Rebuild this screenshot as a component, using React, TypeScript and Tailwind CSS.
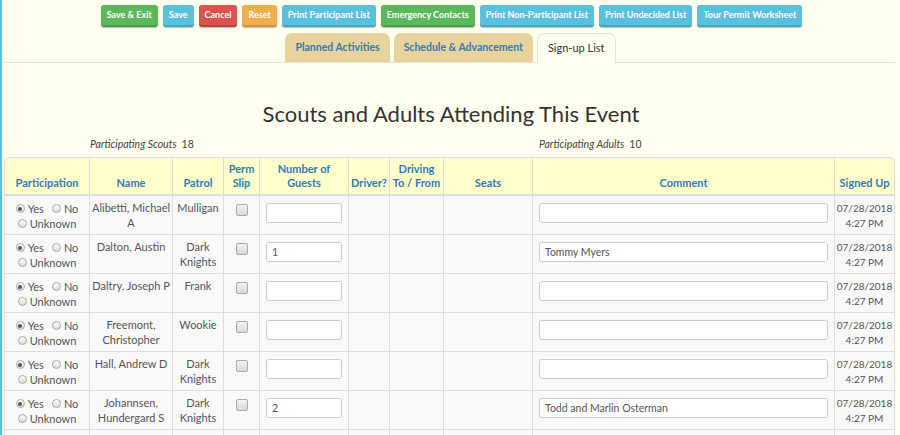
import React from "react";

const font = { fontFamily: 'Lato, "Open Sans", sans-serif' };

type Row = {
  name: string[];
  patrol: string[];
  guests: string;
  comment: string;
};

const rows: Row[] = [
  { name: ["Alibetti, Michael", "A"], patrol: ["Mulligan"], guests: "", comment: "" },
  { name: ["Dalton, Austin"], patrol: ["Dark", "Knights"], guests: "1", comment: "Tommy Myers" },
  { name: ["Daltry, Joseph P"], patrol: ["Frank"], guests: "", comment: "" },
  { name: ["Freemont,", "Christopher"], patrol: ["Wookie"], guests: "", comment: "" },
  { name: ["Hall, Andrew D"], patrol: ["Dark", "Knights"], guests: "", comment: "" },
  { name: ["Johannsen,", "Hundergard S"], patrol: ["Dark", "Knights"], guests: "2", comment: "Todd and Marlin Osterman" },
];

const headers = [
  ["Participation"],
  ["Name"],
  ["Patrol"],
  ["Perm", "Slip"],
  ["Number of", "Guests"],
  ["Driver?"],
  ["Driving", "To / From"],
  ["Seats"],
  ["Comment"],
  ["Signed Up"],
];

const buttons = [
  { label: "Save & Exit", cls: "bg-[#5cb85c] border-[#4a9a4a]" },
  { label: "Save", cls: "bg-[#5bc0de] border-[#46a6c2]" },
  { label: "Cancel", cls: "bg-[#d9534f] border-[#b9403c]" },
  { label: "Reset", cls: "bg-[#f0ad4e] border-[#d3933a]" },
  { label: "Print Participant List", cls: "bg-[#5bc0de] border-[#46a6c2]" },
  { label: "Emergency Contacts", cls: "bg-[#5cb85c] border-[#4a9a4a]" },
  { label: "Print Non-Participant List", cls: "bg-[#5bc0de] border-[#46a6c2]" },
  { label: "Print Undecided List", cls: "bg-[#5bc0de] border-[#46a6c2]" },
  { label: "Tour Permit Worksheet", cls: "bg-[#5bc0de] border-[#46a6c2]" },
];

function Radio({ checked, label }: { checked?: boolean; label: string }) {
  return (
    <span className="inline-flex items-center gap-[3px]">
      <span className="w-[9px] h-[9px] rounded-full border border-[#a9a9a9] bg-gradient-to-b from-[#fdfdfd] to-[#dcdcdc] flex items-center justify-center">
        {checked && <span className="w-[4px] h-[4px] rounded-full bg-[#555]" />}
      </span>
      <span>{label}</span>
    </span>
  );
}

function TextBox({ value, w }: { value: string; w: string }) {
  return (
    <div className={`${w} h-[20px] mx-auto bg-white border border-[#ccc] rounded-[3px] text-left px-[5px] text-[10.5px] leading-[18px] text-[#555]`}>
      {value}
    </div>
  );
}

export default function App() {
  return (
    <div className="h-[435px] overflow-hidden bg-[#fffff0] border-l-2 border-[#5bc0de] text-[#555]" style={font}>
      <div className="flex justify-center gap-[5px] pt-[5px] pl-[1px]">
        {buttons.map((b) => (
          <button
            key={b.label}
            className={`${b.cls} h-[22px] px-[6px] rounded-[3px] border-b-2 text-white text-[9px] font-bold shadow-[0_1px_1px_rgba(0,0,0,0.25)]`}
          >
            {b.label}
          </button>
        ))}
      </div>

      <div className="ml-[2px] mr-[5px] flex justify-center items-end gap-[4px] pt-[6px] border-b border-[#e4e4d8] text-[10.5px] pl-[2px]">
        <div className="h-[29px] px-[10px] flex items-center rounded-t-[7px] bg-[#e9d39c] text-[#337ab7] font-bold">
          Planned Activities
        </div>
        <div className="h-[29px] px-[10px] flex items-center rounded-t-[7px] bg-[#e9d39c] text-[#337ab7] font-bold">
          Schedule &amp; Advancement
        </div>
        <div className="h-[30px] -mb-px px-[10px] flex items-center rounded-t-[7px] bg-[#fffff0] border border-b-0 border-[#e4e4d8] text-[#333] text-[11px]">
          Sign-up List
        </div>
      </div>

      <h1 className="text-center text-[22px] text-[#333] mt-[37px] leading-[28px]">
        Scouts and Adults Attending This Event
      </h1>

      <div className="grid grid-cols-2 text-[10.5px] text-[#444] mt-[9px] leading-[14px]">
        <div className="pl-[88px]">
          <i>Participating Scouts</i>
          <span className="ml-[5px]">18</span>
        </div>
        <div className="pl-[88px]">
          <i>Participating Adults</i>
          <span className="ml-[5px]">10</span>
        </div>
      </div>

      <div className="ml-[2px] mr-[5px] mt-[6px]">
        <table className="w-full table-fixed border-separate border-spacing-0 text-[11px]">
          <colgroup>
            <col className="w-[86px]" />
            <col className="w-[83px]" />
            <col className="w-[51px]" />
            <col className="w-[36px]" />
            <col className="w-[89px]" />
            <col className="w-[41px]" />
            <col className="w-[54px]" />
            <col className="w-[89px]" />
            <col />
            <col className="w-[60px]" />
          </colgroup>
          <thead>
            <tr className="bg-[#ffffcc] text-[#337ab7] h-[39px] leading-[14px]">
              {headers.map((h, i) => (
                <th
                  key={h[0]}
                  className={`align-bottom pb-[4px] px-0 font-bold whitespace-nowrap border-t border-b-2 border-r border-[#ddd] ${i === 0 ? "border-l rounded-tl-[6px]" : ""} ${i === 9 ? "rounded-tr-[6px]" : ""}`}
                >
                  {h.map((l) => (
                    <div key={l}>{l}</div>
                  ))}
                </th>
              ))}
            </tr>
          </thead>
          <tbody>
            {rows.map((r, idx) => (
              <tr key={idx} className="bg-[#f9f9f9] leading-[15px] text-center align-top">
                <td className="border-l border-r border-b border-[#ddd] pt-[5px] pb-[3px] h-[39px]">
                  <div className="flex justify-center gap-[8px]">
                    <Radio checked label="Yes" />
                    <Radio label="No" />
                  </div>
                  <div className="flex justify-center">
                    <Radio label="Unknown" />
                  </div>
                </td>
                <td className="border-r border-b border-[#ddd] pt-[4px] px-[2px] whitespace-nowrap">
                  {r.name.map((n) => (
                    <div key={n}>{n}</div>
                  ))}
                </td>
                <td className="border-r border-b border-[#ddd] pt-[4px]">
                  {r.patrol.map((n) => (
                    <div key={n}>{n}</div>
                  ))}
                </td>
                <td className="border-r border-b border-[#ddd] pt-[8px]">
                  <span className="block mx-auto w-[12px] h-[12px] rounded-[2px] border border-[#aaa] bg-gradient-to-b from-[#f4f4f4] to-[#d8d8d8]" />
                </td>
                <td className="border-r border-b border-[#ddd] pt-[7px]">
                  <TextBox value={r.guests} w="w-[76px]" />
                </td>
                <td className="border-r border-b border-[#ddd]" />
                <td className="border-r border-b border-[#ddd]" />
                <td className="border-r border-b border-[#ddd]" />
                <td className="border-r border-b border-[#ddd] pt-[7px] px-[6px]">
                  <TextBox value={r.comment} w="w-full" />
                </td>
                <td className="border-r border-b border-[#ddd] pt-[5px] text-[10px] text-[#555]">
                  <div>07/28/2018</div>
                  <div>4:27 PM</div>
                </td>
              </tr>
            ))}
            <tr className="bg-[#f9f9f9]">
              <td className="border-l border-r border-[#ddd] h-[39px]" />
              {Array.from({ length: 9 }).map((_, i) => (
                <td key={i} className="border-r border-[#ddd]" />
              ))}
            </tr>
          </tbody>
        </table>
      </div>
    </div>
  );
}
